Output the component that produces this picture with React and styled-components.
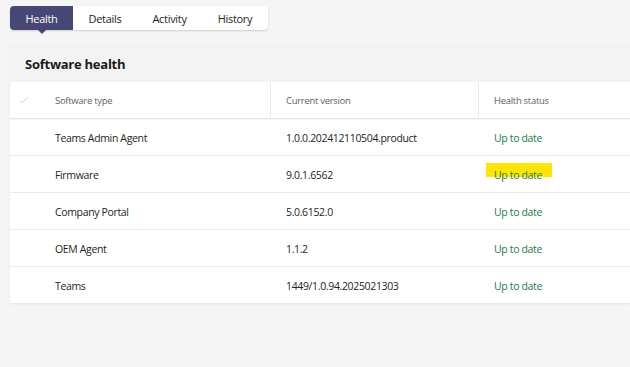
import styled, { createGlobalStyle } from 'styled-components'

const GlobalStyle = createGlobalStyle`
  html, body {
    margin: 0;
    padding: 0;
    background: #f5f5f5;
    font-family: 'Open Sans', 'Noto Sans', sans-serif;
    color: #252423;
  }
`

const Page = styled.main`
  width: 630px;
  height: 367px;
  overflow: hidden;
  padding: 6px 0 0 10px;
  box-sizing: border-box;
  display: flex;
  flex-direction: column;
  gap: 15px;
`

const Tabs = styled.nav`
  display: flex;
  align-self: flex-start;
  background: white;
  border-radius: 4px;
  box-shadow: 0 1px 2px rgba(0, 0, 0, 0.16);
  height: 24px;
`

const Tab = styled.div`
  position: relative;
  display: flex;
  align-items: center;
  padding: 0 15.5px;
  font-size: 11px;
  letter-spacing: -0.3px;
  color: ${({ active }) => (active ? 'white' : '#252423')};
  background: ${({ active }) => (active ? '#464775' : 'transparent')};
  border-radius: ${({ active }) => (active ? '4px 0 0 4px' : '0')};

  &::after {
    content: '';
    display: ${({ active }) => (active ? 'block' : 'none')};
    position: absolute;
    left: 50%;
    bottom: -4px;
    margin-left: -4px;
    border-left: 4px solid transparent;
    border-right: 4px solid transparent;
    border-top: 4px solid #464775;
  }
`

const Card = styled.section`
  background: white;
  box-shadow: 0 1px 2px rgba(0, 0, 0, 0.08);
`

const CardHeader = styled.h2`
  margin: 0;
  height: 37px;
  display: flex;
  align-items: center;
  padding-left: 15px;
  background: #f3f3f3;
  font-size: 13px;
  letter-spacing: -0.25px;
  font-weight: 700;
  color: #1b1a19;
`

const Grid = styled.div`
  display: grid;
  grid-template-columns: 45px 216px 208px 1fr;
`

const HeadRow = styled(Grid)`
  height: 36px;
  border-bottom: 1px solid #e6e6e6;
  box-shadow: 0 1px 1px rgba(0, 0, 0, 0.04);
  font-size: 9.5px;
  letter-spacing: -0.3px;
  color: #616161;
`

const HeadCell = styled.div`
  display: flex;
  align-items: center;
  padding-top: 1px;
  padding-left: ${({ pad }) => pad ?? 15}px;
  border-right: ${({ divider }) => (divider ? '1px solid #ededed' : 'none')};
`

const Row = styled(Grid)`
  height: 36px;
  border-bottom: 1px solid #edebe9;
  font-size: 10.5px;
  letter-spacing: -0.35px;
  &:last-child {
    border-bottom: none;
  }
`

const Cell = styled.div`
  display: flex;
  align-items: center;
  padding-top: 2px;
  padding-left: ${({ pad }) => pad ?? 15}px;
`

const StatusWrap = styled.span`
  position: relative;
  z-index: 0;
  display: inline-flex;
`

const Status = styled.span`
  color: #237b4b;
`

const Marker = styled.span`
  position: absolute;
  left: -8px;
  top: -5px;
  width: 66px;
  height: 14px;
  background: #ffe500;
  z-index: -1;
`

const CheckIcon = () => (
  <svg width="9" height="7" viewBox="0 0 9 7" fill="none">
    <path d="M0.5 3.5 L3 6 L8.5 0.5" stroke="#c8c6c4" strokeWidth="0.9" />
  </svg>
)

const rows = [
  { type: 'Teams Admin Agent', version: '1.0.0.202412110504.product' },
  { type: 'Firmware', version: '9.0.1.6562', marked: true },
  { type: 'Company Portal', version: '5.0.6152.0' },
  { type: 'OEM Agent', version: '1.1.2' },
  { type: 'Teams', version: '1449/1.0.94.2025021303' },
]

const App = () => {
  return (
    <Page>
      <GlobalStyle />
      <Tabs>
        <Tab active>Health</Tab>
        <Tab>Details</Tab>
        <Tab>Activity</Tab>
        <Tab>History</Tab>
      </Tabs>
      <Card>
        <CardHeader>Software health</CardHeader>
        <HeadRow>
          <HeadCell pad={9}>
            <CheckIcon />
          </HeadCell>
          <HeadCell pad={0} divider>Software type</HeadCell>
          <HeadCell divider>Current version</HeadCell>
          <HeadCell>Health status</HeadCell>
        </HeadRow>
        {rows.map((r) => (
          <Row key={r.type}>
            <Cell />
            <Cell pad={0}>{r.type}</Cell>
            <Cell>{r.version}</Cell>
            <Cell>
              <StatusWrap>
                {r.marked && <Marker />}
                <Status>Up to date</Status>
              </StatusWrap>
            </Cell>
          </Row>
        ))}
      </Card>
    </Page>
  )
}

export default App
